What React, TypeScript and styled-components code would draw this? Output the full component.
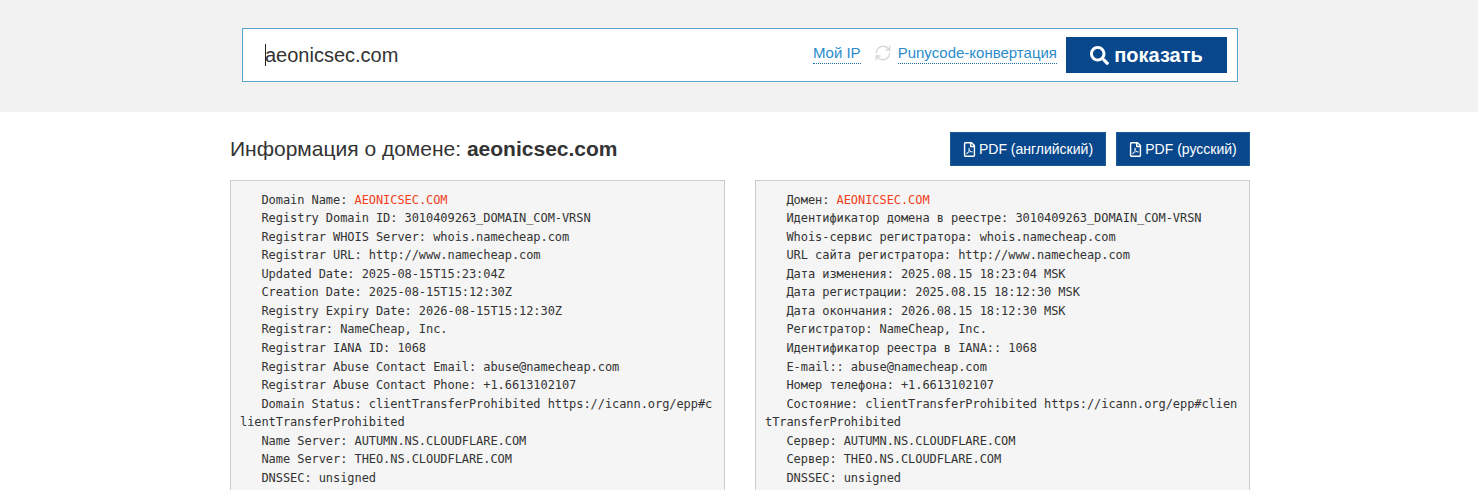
import React from "react";
import styled, { createGlobalStyle } from "styled-components";
import { FaSearch, FaRegFilePdf } from "react-icons/fa";
import { RefreshCw } from "lucide-react";

const GlobalStyle = createGlobalStyle`
  html, body {
    margin: 0;
    padding: 0;
    height: 490px;
    overflow: hidden;
    background: #fff;
    color: #333;
    font-family: "Liberation Sans", Arial, sans-serif;
  }
`;

const SearchSection = styled.section`
  height: 112px;
  box-sizing: border-box;
  padding-top: 28px;
  background: #f2f2f2;
`;

const SearchBar = styled.form`
  width: 996px;
  height: 54px;
  box-sizing: border-box;
  margin-left: 242px;
  padding: 8px 10px 8px 22px;
  display: flex;
  align-items: center;
  background: #fff;
  border: 1px solid #5ba4cf;
`;

const InputWrap = styled.div`
  flex: 1;
  position: relative;
  display: flex;
  align-items: center;
`;

const Caret = styled.span`
  position: absolute;
  left: 0;
  top: 7px;
  width: 1px;
  height: 22px;
  background: #222;
`;

const DomainInput = styled.input`
  width: 100%;
  height: 36px;
  padding: 0;
  border: 0;
  outline: 0;
  background: transparent;
  color: #333;
  font: 20px "Liberation Sans", Arial, sans-serif;
`;

const DottedLink = styled.a`
  color: #2b8ccb;
  font-size: 15px;
  line-height: 18px;
  padding-bottom: 1px;
  border-bottom: 1px dotted #1a6fa8;
  margin-bottom: 2px;
  white-space: nowrap;
`;

const RefreshIcon = styled(RefreshCw)`
  width: 18px;
  height: 18px;
  margin: 0 6px 4px 13px;
  color: #d8d8d8;
`;

const ShowButton = styled.button`
  width: 161px;
  height: 36px;
  margin-left: 9px;
  padding: 0;
  display: flex;
  align-items: center;
  justify-content: center;
  gap: 5px;
  border: 0;
  background: #08478c;
  color: #fff;
  font: bold 20px "Liberation Sans", Arial, sans-serif;
  svg {
    width: 19px;
    height: 19px;
  }
`;

const Content = styled.main`
  width: 1020px;
  margin-left: 230px;
`;

const TitleRow = styled.div`
  height: 34px;
  padding: 20px 0 14px;
  display: flex;
  align-items: center;
  gap: 10px;
`;

const Title = styled.h1`
  flex: 1;
  margin: 0;
  font-size: 21px;
  font-weight: 400;
  color: #333;
  b {
    font-weight: 700;
  }
`;

const PdfButton = styled.a<{ $width: number }>`
  width: ${(p) => p.$width}px;
  height: 34px;
  box-sizing: border-box;
  display: flex;
  align-items: center;
  justify-content: center;
  gap: 3px;
  background: #08478c;
  border: 1px solid #1d5a98;
  color: #fff;
  font-size: 14px;
  white-space: nowrap;
  svg {
    width: 13px;
    height: 15px;
  }
`;

const Columns = styled.div`
  display: grid;
  grid-template-columns: 495px 495px;
  column-gap: 30px;
`;

const WhoisBlock = styled.pre`
  margin: 0;
  padding: 9.55px 9.5px 9.5px 9px;
  background: #f5f5f5;
  border: 1px solid #ccc;
  color: #333;
  font-family: "DejaVu Sans Mono", monospace;
  font-size: 12px;
  letter-spacing: -0.07px;
  line-height: 18.57px;
  white-space: pre-wrap;
  word-break: break-all;
`;

const DomainName = styled.span`
  color: #f2401c;
`;

const englishRest = `
   Registry Domain ID: 3010409263_DOMAIN_COM-VRSN
   Registrar WHOIS Server: whois.namecheap.com
   Registrar URL: http://www.namecheap.com
   Updated Date: 2025-08-15T15:23:04Z
   Creation Date: 2025-08-15T15:12:30Z
   Registry Expiry Date: 2026-08-15T15:12:30Z
   Registrar: NameCheap, Inc.
   Registrar IANA ID: 1068
   Registrar Abuse Contact Email: abuse@namecheap.com
   Registrar Abuse Contact Phone: +1.6613102107
   Domain Status: clientTransferProhibited https://icann.org/epp#clientTransferProhibited
   Name Server: AUTUMN.NS.CLOUDFLARE.COM
   Name Server: THEO.NS.CLOUDFLARE.COM
   DNSSEC: unsigned`;

const russianRest = `
   Идентификатор домена в реестре: 3010409263_DOMAIN_COM-VRSN
   Whois-сервис регистратора: whois.namecheap.com
   URL сайта регистратора: http://www.namecheap.com
   Дата изменения: 2025.08.15 18:23:04 MSK
   Дата регистрации: 2025.08.15 18:12:30 MSK
   Дата окончания: 2026.08.15 18:12:30 MSK
   Регистратор: NameCheap, Inc.
   Идентификатор реестра в IANA:: 1068
   E-mail:: abuse@namecheap.com
   Номер телефона: +1.6613102107
   Состояние: clientTransferProhibited https://icann.org/epp#clientTransferProhibited
   Сервер: AUTUMN.NS.CLOUDFLARE.COM
   Сервер: THEO.NS.CLOUDFLARE.COM
   DNSSEC: unsigned`;

export default function App() {
  return (
    <>
      <GlobalStyle />
      <SearchSection>
        <SearchBar>
          <InputWrap>
            <Caret />
            <DomainInput defaultValue="aeonicsec.com" readOnly />
          </InputWrap>
          <DottedLink>Мой IP</DottedLink>
          <RefreshIcon strokeWidth={1.75} />
          <DottedLink>Punycode-конвертация</DottedLink>
          <ShowButton type="button">
            <FaSearch />
            показать
          </ShowButton>
        </SearchBar>
      </SearchSection>
      <Content>
        <TitleRow>
          <Title>
            Информация о домене: <b>aeonicsec.com</b>
          </Title>
          <PdfButton $width={156}>
            <FaRegFilePdf />
            PDF (английский)
          </PdfButton>
          <PdfButton $width={134}>
            <FaRegFilePdf />
            PDF (русский)
          </PdfButton>
        </TitleRow>
        <Columns>
          <WhoisBlock>
            {"   Domain Name: "}
            <DomainName>AEONICSEC.COM</DomainName>
            {englishRest}
          </WhoisBlock>
          <WhoisBlock>
            {"   Домен: "}
            <DomainName>AEONICSEC.COM</DomainName>
            {russianRest}
          </WhoisBlock>
        </Columns>
      </Content>
    </>
  );
}
